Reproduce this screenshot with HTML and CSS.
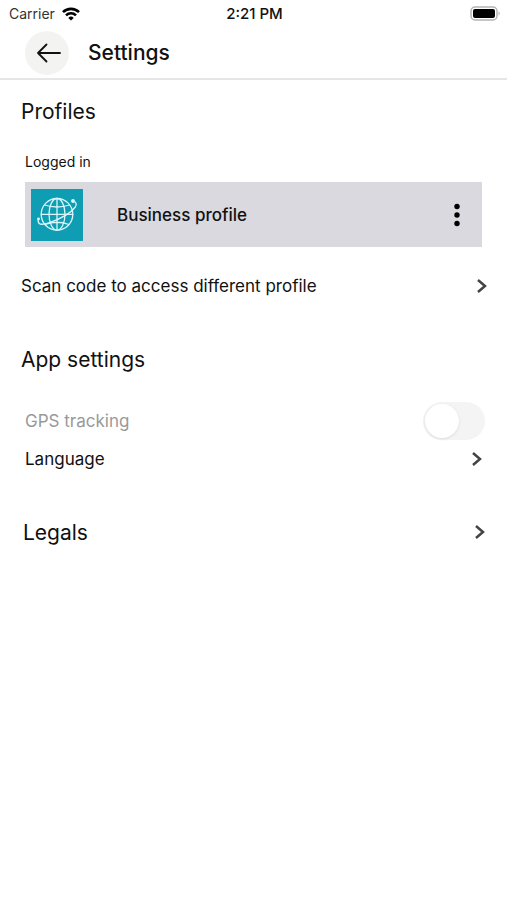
FILE: index.html
```html
<!DOCTYPE html>
<html lang="en">
<head>
    <meta charset="UTF-8">
    <meta name="viewport" content="width=device-width, initial-scale=1.0">
    <title>Settings</title>
    <link rel="stylesheet" href="styles.css">
</head>
<body>
    <!-- Status bar -->
    <div class="status-bar">
        <div class="carrier">
            <span>Carrier</span>
            <svg width="18" height="14" viewBox="0 0 18 14" fill="none" stroke="#000" stroke-width="2.6">
                <path d="M1 5.2a11.3 11.3 0 0 1 16 0"/>
                <path d="M4 8.3a7 7 0 0 1 10 0"/>
                <path d="M9 13.6L6.3 10.9a3.8 3.8 0 0 1 5.4 0z" fill="#000" stroke="none"/>
            </svg>
        </div>
        <span class="time">2:21 PM</span>
        <div class="battery">
            <svg width="30" height="15" viewBox="0 0 30 15">
                <rect x="1" y="1" width="26" height="13" rx="4" fill="#fff" stroke="#b4b4b4" stroke-width="1.5"/>
                <rect x="3" y="3" width="22" height="9" rx="2" fill="#000"/>
                <path d="M28.5 5.5c1.6.6 1.6 3.4 0 4z" fill="#b4b4b4"/>
            </svg>
        </div>
    </div>

    <header class="header">
        <button type="button" class="back-button" aria-label="Back">
            <svg width="28" height="20" viewBox="0 0 28 20" fill="none" stroke="#111" stroke-width="1.8" stroke-linecap="round" stroke-linejoin="round">
                <path d="M27 10H5M13.5 1.500L5 10l8.500 8.500"/>
            </svg>
        </button>
        <h1>Settings</h1>
    </header>

    <main class="content">
        <!-- Profiles -->
        <section class="profiles">
            <h2>Profiles</h2>
            <p class="label">Logged in</p>
            <div class="profile-card">
                <svg class="profile-logo" width="52" height="52" viewBox="0 0 52 52" fill="none" stroke="#d8f6fa" stroke-width="1.3" stroke-linecap="round">
                    <rect width="52" height="52" fill="#0e9db2" stroke="none"/>
                    <circle cx="26" cy="25.3" r="15.8"/>
                    <ellipse cx="26" cy="25.3" rx="8" ry="15.8"/>
                    <path d="M26 9.500v31.600M10.200 25.300h31.600M13.500 16q12.500 4 25 0M14 35.500q12-4.500 24 0"/>
                    <path d="M7.300 30.500C6.500 35.500 10 36.500 18 33.800c11-3.800 22-10 26.300-15.800 1.800-2.600 1-5-2.300-6"/>
                    <circle cx="42" cy="12" r="1.300" fill="#d8f6fa"/>
                    <circle cx="7.500" cy="30" r="0.800" fill="#d8f6fa"/>
                </svg>
                <span class="profile-name">Business profile</span>
                <button type="button" class="menu-button" aria-label="Profile options">
                    <svg width="8" height="24" viewBox="0 0 8 24" fill="#000">
                        <circle cx="4" cy="3.5" r="2.7"/>
                        <circle cx="4" cy="12" r="2.7"/>
                        <circle cx="4" cy="20.5" r="2.7"/>
                    </svg>
                </button>
            </div>
            <a href="#" class="row scan">
                <span>Scan code to access different profile</span>
                <svg class="chevron" width="12" height="16" viewBox="0 0 12 16"><path d="M2 2l7 6-7 6"/></svg>
            </a>
        </section>

        <!-- App settings -->
        <section class="app-settings">
            <h2>App settings</h2>
            <label class="row gps">
                <span>GPS tracking</span>
                <input type="checkbox" class="toggle" disabled>
            </label>
            <a href="#" class="row language">
                <span>Language</span>
                <svg class="chevron" width="12" height="16" viewBox="0 0 12 16"><path d="M2 2l7 6-7 6"/></svg>
            </a>
        </section>

        <!-- Legals -->
        <a href="#" class="row legals">
            <span>Legals</span>
            <svg class="chevron" width="12" height="16" viewBox="0 0 12 16"><path d="M2 2l7 6-7 6"/></svg>
        </a>
    </main>
</body>
</html>
```
FILE: styles.css
```css
body, h1, h2, p, button, input {
    margin: 0;
    padding: 0;
    box-sizing: border-box;
    font-family: Inter, "Liberation Sans", sans-serif;
}

body {
    background-color: #fff;
    color: #111;
}

svg {
    display: block;
    flex-shrink: 0;
}

/* Status bar */
.status-bar {
    display: grid;
    grid-template-columns: 1fr auto 1fr;
    align-items: center;
    height: 27px;
    padding: 0 7px 0 9px;
    font-size: 14px;
}

.carrier {
    display: flex;
    align-items: center;
    gap: 7px;
    color: #333;
}

.time {
    font-size: 15px;
    font-weight: 500;
}

.battery {
    display: flex;
    justify-content: flex-end;
}

/* Header */
.header {
    display: flex;
    align-items: center;
    gap: 19px;
    height: 53px;
    padding: 0 25px;
    box-sizing: border-box;
    border-bottom: 2px solid #e6e6e6;
}

.header h1 {
    font-size: 21px;
    font-weight: 500;
}

.back-button {
    display: flex;
    align-items: center;
    justify-content: center;
    width: 44px;
    height: 44px;
    border: none;
    border-radius: 50%;
    background-color: #f3f3f1;
    cursor: pointer;
}

/* Sections */
.content {
    padding-top: 18px;
}

h2 {
    padding: 0 21px;
    font-size: 21px;
    font-weight: 400;
    line-height: 28px;
}

.label {
    margin-top: 26px;
    padding: 0 25px;
    font-size: 14px;
    line-height: 20px;
}

.profile-card {
    display: flex;
    align-items: center;
    min-height: 65px;
    margin: 10px 25px 0;
    padding: 0 6px;
    box-sizing: border-box;
    background-color: #d9d9df;
}

.profile-name {
    flex: 1;
    margin-left: 34px;
    font-size: 17px;
    font-weight: 500;
}

.menu-button {
    display: flex;
    align-items: center;
    justify-content: center;
    width: 38px;
    height: 38px;
    border: none;
    background: none;
    cursor: pointer;
}

/* Rows */
.row {
    display: flex;
    align-items: center;
    justify-content: space-between;
    min-height: 38px;
    color: #111;
    font-size: 17px;
    text-decoration: none;
}

.chevron {
    fill: none;
    stroke: #444;
    stroke-width: 2.5;
}

.scan {
    margin-top: 20px;
    padding: 0 19px 0 21px;
}

.app-settings {
    margin-top: 41px;
}

.gps {
    margin-top: 28px;
    padding: 0 22px 0 25px;
    color: #999;
}

.language {
    padding: 0 24px 0 25px;
}

.legals {
    margin-top: 35px;
    padding: 0 21px 0 23px;
    font-size: 21px;
}

/* Toggle */
.toggle {
    appearance: none;
    display: flex;
    align-items: center;
    width: 62px;
    height: 38px;
    padding: 2px;
    border-radius: 19px;
    background-color: #f4f4f4;
}

.toggle::before {
    content: "";
    width: 34px;
    height: 34px;
    border-radius: 50%;
    background-color: #fff;
    box-shadow: 0 1px 3px rgba(0, 0, 0, 0.1);
}

.toggle:checked {
    justify-content: flex-end;
    background-color: #0e9db2;
}
```
